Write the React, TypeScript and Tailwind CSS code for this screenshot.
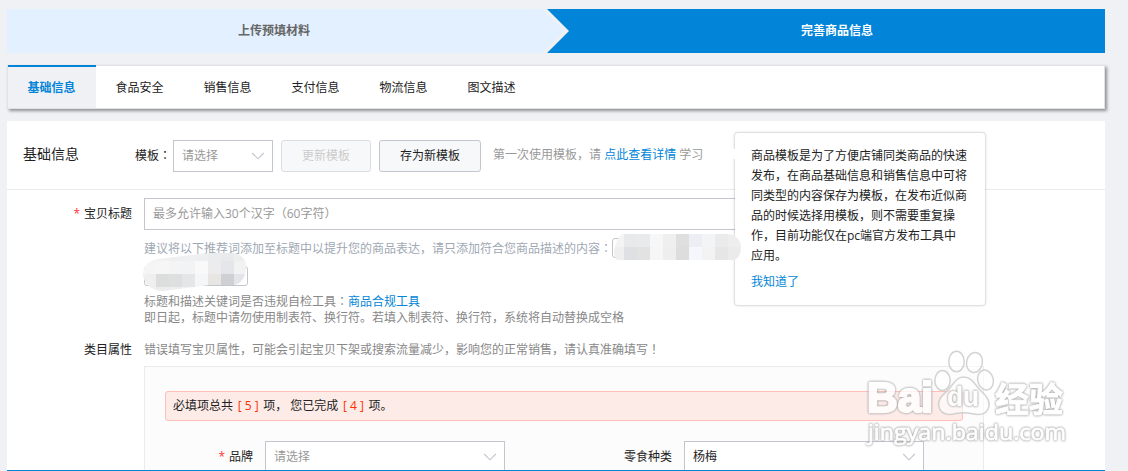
import type { ReactNode } from "react";
import clsx from "clsx";

const TABS = ["基础信息", "食品安全", "销售信息", "支付信息", "物流信息", "图文描述"];

const TIP_LINES = [
  "商品模板是为了方便店铺同类商品的快速",
  "发布，在商品基础信息和销售信息中可将",
  "同类型的内容保存为模板，在发布近似商",
  "品的时候选择用模板，则不需要重复操",
  "作，目前功能仅在pc端官方发布工具中",
  "应用。",
];

// centred full-width punctuation
function Mark({ children }: { children: string }) {
  return (
    <span className="font-['Noto_Sans_CJK_TC',sans-serif] leading-none">{children}</span>
  );
}

function Chevron() {
  return (
    <svg width="14" height="8" viewBox="0 0 14 8" fill="none" className="shrink-0">
      <path d="M1.2 1L7 6.8L12.8 1" stroke="#c4c6cf" strokeWidth="1.1" />
    </svg>
  );
}

interface SelectProps {
  value: string;
  placeholder?: boolean;
  className?: string;
}

function Select({ value, placeholder, className }: SelectProps) {
  return (
    <div
      className={clsx(
        "flex h-8 shrink-0 items-center justify-between border border-[#c4c6cf] bg-white pl-2 pr-[7px]",
        placeholder ? "text-[#999]" : "text-[#222]",
        className,
      )}
    >
      <span>{value}</span>
      <Chevron />
    </div>
  );
}

interface LabelProps {
  children: ReactNode;
  required?: boolean;
  className?: string;
}

function Label({ children, required, className }: LabelProps) {
  return (
    <div className={clsx("shrink-0 text-right text-[#222]", className)}>
      {required && <span className="mr-1 text-[#ff3333]">*</span>}
      {children}
    </div>
  );
}

function Steps() {
  return (
    <div className="flex h-11 shrink-0 bg-[#0285d9] font-bold">
      <div className="flex w-[534px] items-center justify-center bg-[#e3f0ff] text-[#666]">
        上传预填材料
      </div>
      <svg width="28" height="44" viewBox="0 0 28 44" className="shrink-0">
        <path d="M0 0H6L28 22L6 44H0Z" fill="#f0f1f5" />
        <path d="M0 0H1.5L23.5 22L1.5 44H0Z" fill="#e3f0ff" />
      </svg>
      <div className="flex flex-1 items-center justify-center text-white">
        完善商品信息
      </div>
    </div>
  );
}

function Tabs() {
  return (
    <div className="mt-3 flex h-11 shrink-0 border border-[#e1e2e6] bg-white shadow-[2px_2px_3px_rgba(0,0,0,0.4)]">
      {TABS.map((tab, i) => (
        <div
          key={tab}
          className={clsx(
            "flex w-[88px] items-center justify-center pr-px",
            i === 0
              ? "-mt-px border-t-2 border-[#0285d9] bg-[#f0f1f5] font-bold text-[#0285d9]"
              : "pt-0.5 text-[#222]",
          )}
        >
          {tab}
        </div>
      ))}
    </div>
  );
}

function TemplateBar() {
  return (
    <div className="flex h-[69px] shrink-0 items-center border-b border-[#ebebeb] pl-4 pt-0.5">
      <div className="-mt-1 w-28 text-sm leading-5 text-[#222]">基础信息</div>
      <div className="w-[38px] whitespace-nowrap text-[#222]">
        模板
        <Mark>：</Mark>
      </div>
      <Select value="请选择" placeholder className="w-[100px]" />
      <button className="ml-2 h-8 w-[90px] rounded-[3px] border border-[#dcdee3] bg-[#f7f8fa] text-[#ccc]">
        更新模板
      </button>
      <button className="ml-2 h-8 w-[102px] rounded-[3px] border border-[#c4c6cf] bg-[#f7f8fa] text-[#222]">
        存为新模板
      </button>
      <div className="ml-3 -mt-0.5 text-[#999]">
        第一次使用模板，请 <a className="text-[#0285d9]">点此查看详情</a> 学习
      </div>
    </div>
  );
}

const MASK_WIDE = [
  ["#f4f4f4", "#e8e9eb", "#e9eaec", "#f7f7f7", "#efefef", "#dfdfdf", "#eceef3", "#f3f4f6", "#ebebeb", "#eeeeee"],
  ["#efefef", "#dfe0e3", "#e2e2e2", "#f6f6f6", "#eeeeee", "#dddddd", "#f5f7fc", "#f3f3f3", "#e6e6e6", "#ebebeb"],
];

const MASK_SMALL = [
  ["#f3f3f3", "#f1f1f1", "#eeeff0", "#f0f0f1", "#eeeff1", "#ebecee", "#e9eaec", "#eeeeee"],
  ["#f5f5f5", "#f6f6f6", "#f4f4f4", "#f2f3f5", "#f9f9fa", "#ececec", "#e5e6e9", "#f2f2f2"],
  ["#efefef", "#dcdddd", "#dedfdf", "#e5e6e7", "#f4f6f8", "#e8e6e3", "#cfd0d4", "#e4e5e8"],
  ["#f0f0f0", "#ededed", "#eeeeee", "#f2f2f2", "#f7f7f7", "#ffffff", "#ffffff", "#ffffff"],
];

function Mosaic({ rows }: { rows: string[][] }) {
  return (
    <>
      {rows.map((row, y) =>
        row.map((fill, x) => (
          <rect key={`${x}-${y}`} x={x * 13} y={y * 13} width="13" height="13" fill={fill} />
        )),
      )}
    </>
  );
}

function Suggestions() {
  return (
    <div className="mt-2 h-14">
      <div className="flex h-5 items-center whitespace-nowrap text-[#a0a8b4]">
        <span className="pt-px">
          建议将以下推荐词添加至标题中以提升您的商品表达，请只添加符合您商品描述的内容
          <Mark>：</Mark>
        </span>
        <span className="relative h-5 w-32 rounded-[3px] border border-[#c4c6cf]">
          <svg width="130" height="26" viewBox="0 0 130 26" className="absolute -top-[5px] left-0 z-20">
            <clipPath id="wide">
              <path d="M9 0H113C123 0 128 6 128 13C128 20 125 26 119 26H4C1 22 0 18 2 14C3 8 5 3 9 0Z" />
            </clipPath>
            <g clipPath="url(#wide)">
              <g transform="translate(-2 0)">
                <Mosaic rows={MASK_WIDE} />
              </g>
            </g>
          </svg>
        </span>
      </div>
      <div className="relative mt-2 h-5 w-[104px] rounded-[3px] border border-[#c4c6cf]">
        <svg width="104" height="39" viewBox="0 0 104 39" className="absolute -left-[2px] -top-[14px]">
          <clipPath id="small">
            <path d="M0 20C1 11 6 8 15 6L56 1L68 0H90C99 1 104 8 103 15C103 24 98 31 91 32H66L52 34L20 38C8 38 0 30 0 20Z" />
          </clipPath>
          <g clipPath="url(#small)">
            <g transform="translate(0 -5)">
              <Mosaic rows={MASK_SMALL} />
            </g>
          </g>
        </svg>
      </div>
    </div>
  );
}

function TitleField() {
  return (
    <div className="flex gap-3 pt-2">
      <Label required className="w-[125px] leading-8">
        宝贝标题
      </Label>
      <div>
        <div className="h-8 w-[796px] border border-[#c4c6cf] pl-2 leading-[30px] text-[#999]">
          最多允许输入30个汉字
          <Mark>（</Mark>60字符<Mark>）</Mark>
        </div>
        <Suggestions />
        <div className="h-8 text-[#888] leading-4">
          标题和描述关键词是否违规自检工具
          <Mark>：</Mark>
          <a className="text-[#0285d9]">商品合规工具</a>
          <br />
          即日起，标题中请勿使用制表符、换行符。若填入制表符、换行符，系统将自动替换成空格
        </div>
      </div>
    </div>
  );
}

function CategoryField() {
  return (
    <div className="mt-4 flex gap-3 leading-4">
      <Label className="w-[125px]">类目属性</Label>
      <div>
        <div className="h-4 text-[#888]">
          错误填写宝贝属性，可能会引起宝贝下架或搜索流量减少，影响您的正常销售，请认真准确填写
          <Mark>！</Mark>
        </div>
        <div className="mt-2 h-40 w-[840px] border border-[#ebebeb] bg-[#fcfcfc] px-5 pt-6">
          <div className="h-[30px] rounded-[3px] border border-[#ffbfb5] bg-[#fdebe8] pl-[7px] leading-7 text-[#222]">
            必填项总共 <span className="mx-[1.5px] text-[#ff3000]">[ 5 ]</span> 项， 您已完成{" "}
            <span className="mx-[1.5px] text-[#ff3000]">[ 4 ]</span> 项。
          </div>
          <div className="mt-5 flex items-center">
            <Label required className="w-[88px]">
              品牌
            </Label>
            <Select value="请选择" placeholder className="ml-3 w-60" />
            <Label className="w-[167px]">零食种类</Label>
            <Select value="杨梅" className="ml-3 w-60" />
          </div>
        </div>
      </div>
    </div>
  );
}

function TemplateTip() {
  return (
    <div className="absolute left-[735px] top-[133px] z-10 h-[172px] w-[250px] rounded-[3px] bg-white px-4 pt-[13px] text-[#222] shadow-[0_0_2px_1px_rgba(0,0,0,0.16)]">
      <div className="absolute -left-[3px] top-4 h-[10px] w-1 bg-white" />
      {TIP_LINES.map((line) => (
        <p key={line} className="whitespace-nowrap leading-5">
          {line}
        </p>
      ))}
      <a className="mt-1.5 block leading-5 text-[#0285d9]">我知道了</a>
    </div>
  );
}

function Watermark() {
  return (
    <svg
      width="212"
      height="106"
      viewBox="0 0 212 106"
      className="absolute left-[860px] top-[345px] z-30"
      fill="#fff"
      stroke="#fff"
      strokeLinejoin="round"
    >
      <g fillOpacity="0.6" stroke="#c8c8c8" strokeOpacity="0.8" strokeWidth="1.5">
        <ellipse cx="82.5" cy="35.5" rx="7.7" ry="10" />
        <ellipse cx="96.5" cy="16.5" rx="7.7" ry="10.3" />
        <ellipse cx="114.5" cy="17.5" rx="7.9" ry="10" transform="rotate(12 114.5 17.5)" />
        <ellipse cx="125.5" cy="35" rx="7.8" ry="10" transform="rotate(-14 125.5 35)" />
        <path d="M103.5 32C112 32 115 40 121 46C128 52 131 58 128 64C125 71 117 70 111 68.5C106 67.5 101 67.5 96 68.5C88 71 81 69 79 62C77 54 83 50 88 45C93 40 96 32 103.5 32Z" />
      </g>
      <g className="opacity-80 [filter:drop-shadow(0_0_1px_#888)_drop-shadow(0_0_0.5px_#bbb)]">
        <text x="7" y="67" fontSize="43" fontWeight="700" strokeWidth="2.5" textLength="66" lengthAdjust="spacingAndGlyphs" className="font-['Liberation_Sans',sans-serif]">
          Bai
        </text>
        <text x="87" y="61" fontSize="27" fontWeight="700" strokeWidth="0.3" textLength="32" lengthAdjust="spacingAndGlyphs" className="font-['Liberation_Sans',sans-serif]">
          du
        </text>
        <text x="135" y="67" fontSize="34" fontWeight="700" strokeWidth="1" textLength="68" lengthAdjust="spacingAndGlyphs" className="font-['Noto_Sans_CJK_SC',sans-serif]">
          经验
        </text>
        <text x="8" y="95" fontSize="21" strokeWidth="0.8" textLength="198" lengthAdjust="spacingAndGlyphs" className="font-['Open_Sans',sans-serif]">
          jingyan.baidu.com
        </text>
      </g>
    </svg>
  );
}

export default function App() {
  return (
    <div className="relative flex h-[471px] w-[1128px] flex-col overflow-hidden bg-[#f0f1f5] pl-[7px] pr-[23px] pt-[9px] font-['Open_Sans','Noto_Sans_CJK_SC',sans-serif] text-xs">
      <Steps />
      <Tabs />
      <div className="mt-3 flex h-[350px] shrink-0 flex-col overflow-hidden border-b border-[#0285d9] bg-white">
        <TemplateBar />
        <TitleField />
        <CategoryField />
      </div>
      <TemplateTip />
      <Watermark />
    </div>
  );
}
